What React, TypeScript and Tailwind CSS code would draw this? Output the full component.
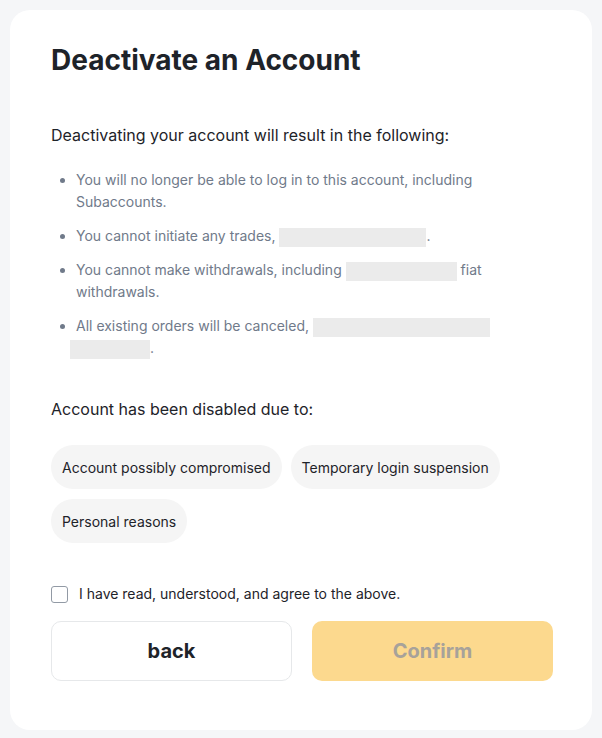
import { useState } from "react";

const reasons = [
  "Account possibly compromised",
  "Temporary login suspension",
  "Personal reasons",
];

function Redacted({ w }: { w: string }) {
  return <span className={`inline-block h-[19px] align-middle bg-[#ebebeb] ${w}`} />;
}

export default function App() {
  const [agree, setAgree] = useState(false);

  return (
    <div className="min-h-screen bg-[#f5f6f8] p-[10px] font-['Inter',sans-serif]">
      <div className="bg-white rounded-[20px] pl-[41px] pr-[39px] pt-[30px] pb-[49px] h-[720px] w-[582px]">
        <h1 className="text-[28px] font-bold text-[#1e2329] leading-[40px]">Deactivate an Account</h1>

        <p className="mt-[43px] text-[16px] text-[#1e2329] leading-[24px]">
          Deactivating your account will result in the following:
        </p>

        <ul className="mt-[22px] flex flex-col gap-[12px] text-[14px] leading-[22px] text-[#707a8a] pl-[25px] pr-[40px] list-disc marker:text-[#707a8a]">
          <li>You will no longer be able to log in to this account, including Subaccounts.</li>
          <li>
            You cannot initiate any trades, <Redacted w="w-[147px]" />.
          </li>
          <li>
            You cannot make withdrawals, including <Redacted w="w-[111px]" /> fiat withdrawals.
          </li>
          <li>
            All existing orders will be canceled, <Redacted w="w-[177px]" />{" "}
            <Redacted w="w-[80px] -ml-[6px]" />.
          </li>
        </ul>

        <p className="mt-[38px] text-[16px] text-[#1e2329] leading-[24px]">Account has been disabled due to:</p>

        <div className="mt-[24px] flex flex-wrap gap-x-[9px] gap-y-[10px]">
          {reasons.map((r) => (
            <button
              key={r}
              className="h-[44px] px-[11px] rounded-[22px] bg-[#f5f5f5] text-[14px] text-[#1e2329]"
            >
              {r}
            </button>
          ))}
        </div>

        <label className="mt-[41px] flex items-center gap-[11px] text-[14px] leading-[20px] text-[#1e2329] cursor-pointer">
          <input
            type="checkbox"
            checked={agree}
            onChange={() => setAgree(!agree)}
            className="appearance-none w-[17px] h-[17px] rounded-[3px] border border-[#929aa5] bg-white"
          />
          I have read, understood, and agree to the above.
        </label>

        <div className="mt-[17px] grid grid-cols-2 gap-[20px]">
          <button className="h-[60px] rounded-[10px] border border-[#e6e8ea] bg-white text-[20px] font-bold text-[#1e2329]">
            back
          </button>
          <button className="h-[60px] rounded-[10px] bg-[#fcd98e] text-[20px] font-bold text-[#a7a29a]">
            Confirm
          </button>
        </div>
      </div>
    </div>
  );
}
